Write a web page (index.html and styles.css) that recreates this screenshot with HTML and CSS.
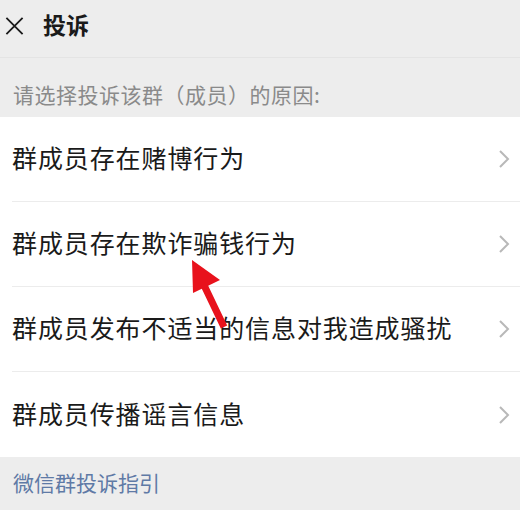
FILE: index.html
```html
<!DOCTYPE html>
<html lang="zh-CN">
<head>
    <meta charset="UTF-8">
    <meta name="viewport" content="width=device-width, initial-scale=1.0">
    <title>投诉</title>
    <link rel="stylesheet" href="styles.css">
</head>
<body>
    <div class="page">
        <div class="header">
            <svg class="close" width="20" height="20" viewBox="0 0 20 20">
                <path d="M1 1 L19 19 M19 1 L1 19" stroke="#1a1a1a" stroke-width="2" fill="none"/>
            </svg>
            <span class="title">投诉</span>
        </div>
        <div class="tip">请选择投诉该群（成员）的原因:</div>
        <div class="list">
            <div class="item">
                <span>群成员存在赌博行为</span>
                <svg class="arrow" width="12" height="20" viewBox="0 0 12 20"><path d="M2 2 L10 10 L2 18" stroke="#b8b8b8" stroke-width="2" fill="none"/></svg>
            </div>
            <div class="item">
                <span>群成员存在欺诈骗钱行为</span>
                <svg class="arrow" width="12" height="20" viewBox="0 0 12 20"><path d="M2 2 L10 10 L2 18" stroke="#b8b8b8" stroke-width="2" fill="none"/></svg>
            </div>
            <div class="item">
                <span>群成员发布不适当的信息对我造成骚扰</span>
                <svg class="arrow" width="12" height="20" viewBox="0 0 12 20"><path d="M2 2 L10 10 L2 18" stroke="#b8b8b8" stroke-width="2" fill="none"/></svg>
            </div>
            <div class="item">
                <span>群成员传播谣言信息</span>
                <svg class="arrow" width="12" height="20" viewBox="0 0 12 20"><path d="M2 2 L10 10 L2 18" stroke="#b8b8b8" stroke-width="2" fill="none"/></svg>
            </div>
        </div>
        <div class="guide">微信群投诉指引</div>

        <!-- red pointer drawn over the list -->
        <svg class="pointer" width="60" height="80" viewBox="0 0 60 80">
            <polygon points="12,5 13,38 21.8,33.7 40.8,73.5 47.2,70.5 28.2,30.7 40,25" fill="#e8121c"/>
        </svg>
    </div>
</body>
</html>
```

FILE: styles.css
```css
body {
    margin: 0;
    background-color: #ededed;
    font-family: "Noto Sans CJK SC", "Noto Sans", sans-serif;
}
.page {
    position: relative;
    width: 520px;
    height: 510px;
    overflow: hidden;
    background-color: #ededed;
}
.header {
    height: 57px;
    display: flex;
    align-items: center;
    padding-left: 5px;
    border-bottom: 1px solid #e4e4e4;
}
.close {
    width: 19px;
    height: 18px;
    margin-top: -6px;
}
.title {
    margin-left: 19px;
    font-size: 23px;
    font-weight: bold;
    color: #1a1a1a;
    margin-top: -10px;
}
.tip {
    height: 59px;
    box-sizing: border-box;
    padding: 21px 0 0 13px;
    font-size: 21px;
    line-height: 30px;
    letter-spacing: 0.5px;
    color: #8a8a8a;
}
.list {
    background-color: #fff;
}
.item {
    height: 85px;
    margin-left: 12px;
    padding-right: 10px;
    display: flex;
    align-items: center;
    justify-content: space-between;
    border-bottom: 1px solid #ececec;
    box-sizing: border-box;
    font-size: 25px;
    letter-spacing: 0.9px;
    color: #1a1a1a;
}
.item:last-child {
    border-bottom: none;
}
.item span {
    margin-top: -4px;
}
.arrow {
    width: 12px;
    height: 20px;
}
.guide {
    padding: 10px 0 0 13px;
    font-size: 21px;
    line-height: 30px;
    color: #5f7aa6;
}
.pointer {
    position: absolute;
    left: 180px;
    top: 255px;
}
```
